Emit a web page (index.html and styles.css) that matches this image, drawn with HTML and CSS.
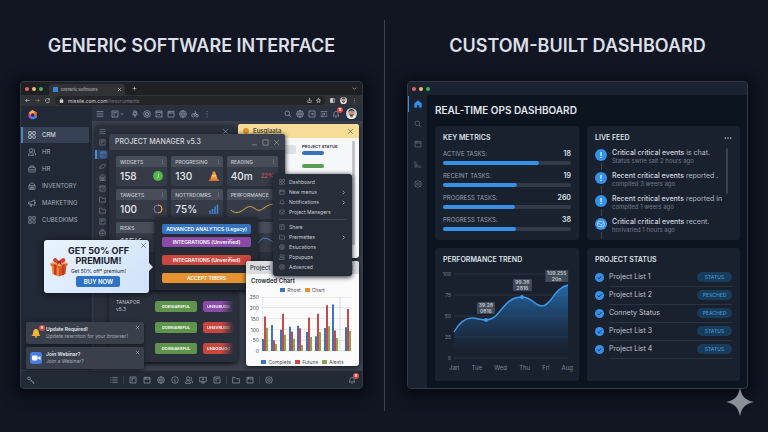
FILE: index.html
```html
<!DOCTYPE html>
<html lang="en">
<head>
  <meta charset="UTF-8">
  <meta name="viewport" content="width=device-width, initial-scale=1.0">
  <title>Software comparison</title>
  <link rel="stylesheet" href="styles.css">
</head>
<body>
  <!-- icon sprite -->
  <svg class="sprite" aria-hidden="true">
    <symbol id="i-menu" viewBox="0 0 24 24"><path d="M2 5h20M2 12h20M2 19h20"/></symbol>
    <symbol id="i-list" viewBox="0 0 24 24"><path d="M7 5h16M7 12h16M7 19h16M1 5h3M1 12h3M1 19h3"/></symbol>
    <symbol id="i-box" viewBox="0 0 24 24"><path d="M3 3h18v18H3zM7 8h10M7 12h5M8 17l3-2"/></symbol>
    <symbol id="i-boxcheck" viewBox="0 0 24 24"><path d="M3 3h18v18H3zM3 7h18M8 13l3 3 5-5"/></symbol>
    <symbol id="i-boxarrow" viewBox="0 0 24 24"><path d="M3 3h18v18H3zM8 12h8M13 8l4 4-4 4"/></symbol>
    <symbol id="i-calendar" viewBox="0 0 24 24"><path d="M3 4h18v17H3zM3 9h18M8 4v5"/></symbol>
    <symbol id="i-mic" viewBox="0 0 24 24"><path d="M12 2a4 4 0 0 1 4 4v5a4 4 0 0 1-8 0V6a4 4 0 0 1 4-4zM5 10c0 10 14 10 14 0M12 17v5M8 7h8"/></symbol>
    <symbol id="i-target" viewBox="0 0 24 24"><circle cx="12" cy="12" r="10"/><circle cx="12" cy="12" r="5"/><path d="M12 10v4"/></symbol>
    <symbol id="i-globe" viewBox="0 0 24 24"><circle cx="12" cy="12" r="10"/><path stroke-width="1.5" d="M2 12h20M12 2v20M12 2c-6 6-6 14 0 20M12 2c6 6 6 14 0 20"/></symbol>
    <symbol id="i-bike" viewBox="0 0 24 24"><circle cx="7" cy="16" r="5"/><circle cx="18" cy="17" r="4"/><path d="M7 16l6-8 5 9M11 3l4 3-2 5"/></symbol>
    <symbol id="i-dots" viewBox="0 0 24 24"><path d="M12 3v3M12 11v3M12 19v3"/></symbol>
    <symbol id="i-more" viewBox="0 0 24 24"><path stroke-width="3" d="M2 12h4M10 12h4M18 12h4"/></symbol>
    <symbol id="i-search" viewBox="0 0 24 24"><circle cx="10" cy="10" r="7"/><path d="M15 15l7 7"/></symbol>
    <symbol id="i-sliders" viewBox="0 0 24 24"><path d="M2 5h20M2 12h12M18 12h4M2 19h7M13 19h9M14 9v6M9 16v6"/></symbol>
    <symbol id="i-bell" viewBox="0 0 24 24"><path d="M3 18h18c-3-3-3-5-3-8 0-8-12-8-12 0 0 3 0 5-3 8zM10 22h4"/></symbol>
    <symbol id="i-grid" viewBox="0 0 24 24"><rect x="2" y="2" width="8" height="8" rx="1"/><rect x="14" y="2" width="8" height="8" rx="1"/><rect x="2" y="14" width="8" height="8" rx="1"/><rect x="14" y="14" width="8" height="8" rx="3"/></symbol>
    <symbol id="i-users" viewBox="0 0 24 24"><circle cx="9" cy="7" r="5"/><path d="M1 22c0-11 16-11 16 0zM16 3c5 0 5 8 1 9 4 1 6 4 6 10"/></symbol>
    <symbol id="i-case" viewBox="0 0 24 24"><rect x="2" y="7" width="20" height="14" rx="3"/><path d="M7 7V3h10v4M2 12c6 4 14 4 20 0M12 12v4"/></symbol>
    <symbol id="i-store" viewBox="0 0 24 24"><path d="M3 9l9-7 9 7v13H3zM3 11h18M8 22v-7h8v7M12 15v7"/></symbol>
    <symbol id="i-horn" viewBox="0 0 24 24"><path d="M2 9h6l12-6v17L8 15H2zM6 15l2 7h3l-1-6M22 9v5"/></symbol>
    <symbol id="i-folder" viewBox="0 0 24 24"><path d="M2 4h7l3 4h10v13H2z"/></symbol>
    <symbol id="i-leaf" viewBox="0 0 24 24"><path d="M3 19C1 9 9 10 12 7c3-3 6-3 10-3-1 6-2 6-4 10-3 6-10 1-15 5z"/></symbol>
    <symbol id="i-bars" viewBox="0 0 24 24"><path d="M3 3v18h19M8 18v-7M12 18v-3M16 18v-2M8 8l3 2"/></symbol>
    <symbol id="i-gear" viewBox="0 0 24 24"><path d="M12 1l3 3h5v5l3 3-3 3v5h-5l-3 3-3-3H4v-5l-3-3 3-3V4h5z"/><circle cx="12" cy="12" r="4"/></symbol>
    <symbol id="i-info" viewBox="0 0 24 24"><circle cx="12" cy="12" r="10"/><path d="M12 6v2M10 11h2v7"/></symbol>
    <symbol id="i-screen" viewBox="0 0 24 24"><path d="M2 4h20v13H2zM12 17v4M7 21h10M12 7v6M9 10h6"/></symbol>
    <symbol id="i-key" viewBox="0 0 24 24"><circle cx="6" cy="7" r="4"/><path d="M9 10l12 10M14 14l-3 4M18 18v4h4"/></symbol>
    <symbol id="i-share" viewBox="0 0 24 24"><path d="M12 15V2M8 6l4-4 4 4M6 10H4v12h16V10h-2"/></symbol>
    <symbol id="i-star" viewBox="0 0 24 24"><path d="M12 2l3 7 7 1-5 5 1 7-6-4-6 4 1-7-5-5 7-1z"/></symbol>
    <symbol id="i-back" viewBox="0 0 24 24"><path d="M22 12H3M11 4l-8 8 8 8"/></symbol>
    <symbol id="i-forward" viewBox="0 0 24 24"><path d="M2 12h19M13 4l8 8-8 8"/></symbol>
    <symbol id="i-reload" viewBox="0 0 24 24"><path d="M20 6a10 10 0 1 0 2 8M21 1v7h-7"/></symbol>
    <symbol id="i-lock" viewBox="0 0 24 24"><path fill="currentColor" d="M5 10h14v11H5z"/><path d="M8 10V7c0-5 8-5 8 0v3"/></symbol>
    <symbol id="i-close" viewBox="0 0 24 24"><path d="M4 4l16 16M20 4L4 20"/></symbol>
    <symbol id="i-min" viewBox="0 0 24 24"><path d="M3 20h18"/></symbol>
    <symbol id="i-max" viewBox="0 0 24 24"><path d="M3 3h18v18H3z"/></symbol>
    <symbol id="i-plus" viewBox="0 0 24 24"><path d="M12 3v18M3 12h18"/></symbol>
    <symbol id="i-down" viewBox="0 0 24 24"><path d="M4 8l8 8 8-8"/></symbol>
    <symbol id="i-right" viewBox="0 0 24 24"><path d="M8 3l9 9-9 9"/></symbol>
    <symbol id="i-panel" viewBox="0 0 24 24"><path d="M3 3h18v18H3z"/><path fill="currentColor" d="M3 3h10v18H3z"/></symbol>
    <symbol id="i-check" viewBox="0 0 24 24"><path d="M6 12l4 5 8-9"/></symbol>
    <symbol id="i-alert" viewBox="0 0 24 24"><path stroke-width="4" d="M12 3v11M12 17v4"/></symbol>
    <symbol id="i-mail" viewBox="0 0 24 24"><rect x="2" y="4" width="20" height="16" rx="5"/><path d="M3 8l9 7 9-7"/></symbol>
    <symbol id="i-home" viewBox="0 0 24 24"><path fill="currentColor" d="M12 2L2 10v12h6v-7h8v7h6V10z"/></symbol>
    <symbol id="i-face" viewBox="0 0 24 24"><g stroke="none"><circle cx="12" cy="12" r="12" fill="#c9cdd3"/><path d="M3 20c1-7 17-7 18 0-4 5-14 5-18 0z" fill="#eef0f3"/><path d="M9 14h6v5l-3 2-3-2z" fill="#a56f56"/><ellipse cx="12" cy="11" rx="5" ry="6" fill="#c98f74"/><path d="M6 11C3-1 21-1 18 11c-1-5-2-5-6-5s-5 0-6 5z" fill="#2f2928"/><path d="M7 13c0 7 10 7 10 0-2 2-8 2-10 0z" fill="#5d463d"/></g></symbol>
  </svg>

  <section class="side side-left">
    <h1>GENERIC SOFTWARE INTERFACE</h1>
    <div class="window browser">
      <div class="tabs">
        <i class="light red"></i><i class="light yellow"></i><i class="light green"></i>
        <div class="tab"><b class="favicon"></b><span>Dreneric Softhoons</span><svg class="icon tiny"><use href="#i-close"/></svg></div>
        <svg class="icon tiny"><use href="#i-plus"/></svg>
        <svg class="icon tiny push"><use href="#i-down"/></svg>
      </div>
      <div class="address">
        <svg class="icon tiny"><use href="#i-back"/></svg>
        <svg class="icon tiny dim"><use href="#i-forward"/></svg>
        <svg class="icon tiny"><use href="#i-reload"/></svg>
        <div class="url">
          <svg class="icon tiny"><use href="#i-lock"/></svg>
          <span>missile.com.com<em>/lissoruments</em></span>
          <svg class="icon tiny push"><use href="#i-share"/></svg>
          <svg class="icon tiny"><use href="#i-star"/></svg>
        </div>
        <svg class="icon tiny"><use href="#i-panel"/></svg>
        <svg class="icon small"><use href="#i-face"/></svg>
        <svg class="icon tiny"><use href="#i-dots"/></svg>
      </div>

      <div class="app">
        <aside class="sidebar">
          <svg class="logo" viewBox="0 0 24 26">
            <path stroke="#d94b9b" d="M5 8v11"/>
            <path stroke="#8b5be8" d="M4 17l8 5"/>
            <path stroke="#3d8bf0" d="M11 22l9-4v-4"/>
            <path stroke="#ee6a3d" d="M20 15V8l-6-3"/>
            <path stroke="#fbb04a" d="M16 6l-4-2-8 5"/>
          </svg>
          <nav>
            <a href="#" class="active"><svg class="icon"><use href="#i-grid"/></svg>CRM</a>
            <a href="#"><svg class="icon"><use href="#i-users"/></svg>HR</a>
            <a href="#"><svg class="icon"><use href="#i-case"/></svg>HR</a>
            <a href="#"><svg class="icon"><use href="#i-store"/></svg>INVENTORY</a>
            <a href="#"><svg class="icon"><use href="#i-horn"/></svg>MARKETING</a>
            <a href="#"><svg class="icon"><use href="#i-grid"/></svg>CUBEDKIMS</a>
          </nav>
        </aside>

        <div class="main">
          <div class="toolbar">
            <svg class="icon"><use href="#i-menu"/></svg>
            <span class="drop"><svg class="icon"><use href="#i-box"/></svg><svg class="icon caret"><use href="#i-down"/></svg></span>
            <svg class="icon"><use href="#i-mic"/></svg>
            <svg class="icon"><use href="#i-target"/></svg>
            <svg class="icon"><use href="#i-boxcheck"/></svg>
            <svg class="icon"><use href="#i-calendar"/></svg>
            <svg class="icon"><use href="#i-globe"/></svg>
            <svg class="icon"><use href="#i-bike"/></svg>
            <svg class="icon"><use href="#i-dots"/></svg>
            <svg class="icon push"><use href="#i-search"/></svg>
            <svg class="icon"><use href="#i-globe"/></svg>
            <svg class="icon"><use href="#i-boxarrow"/></svg>
            <svg class="icon"><use href="#i-sliders"/></svg>
            <span class="alerts"><svg class="icon"><use href="#i-bell"/></svg><b class="badge">9</b></span>
            <svg class="avatar"><use href="#i-face"/></svg>
          </div>

          <div class="desk">
            <div class="pane tools">
              <div class="rail">
                <svg class="icon"><use href="#i-menu"/></svg>
                <svg class="icon"><use href="#i-box"/></svg>
                <span class="on"><svg class="icon"><use href="#i-boxcheck"/></svg></span>
                <svg class="icon"><use href="#i-leaf"/></svg>
                <svg class="icon"><use href="#i-store"/></svg>
                <svg class="icon"><use href="#i-boxcheck"/></svg>
                <svg class="icon"><use href="#i-folder"/></svg>
                <svg class="icon"><use href="#i-folder"/></svg>
                <svg class="icon"><use href="#i-box"/></svg>
                <svg class="icon"><use href="#i-case"/></svg>
              </div>
              <svg class="icon small"><use href="#i-close"/></svg>
            </div>

            <div class="pane notice">
              <header><i class="coin"></i>Eusglaata<svg class="icon small push"><use href="#i-close"/></svg></header>
              <div class="notice-body">
                <i class="ghost"></i>
                <div class="notice-status">
                  <h3>PROJECT STATUS</h3>
                  <i class="chip blue"></i>
                  <i class="chip green"></i>
                </div>
              </div>
            </div>

            <div class="pane modules">
              <div class="module"><p>TANAPOR<br><span>v5.3</span></p><button class="ok">DOENIARSFUL</button><button class="un purple">UNSUBUGG</button></div>
              <div class="module"><p></p><button class="ok">DOENIAREFUL</button><button class="un red">UNSVRUGG</button></div>
              <div class="module"><p></p><button class="ok">DOSNIAKSFUL</button><button class="un red">UNSODUGG</button></div>
            </div>

            <div class="pane manager">
              <header><h2>PROJECT MANAGER v5.3</h2>
                <svg class="icon small push"><use href="#i-min"/></svg><svg class="icon small"><use href="#i-max"/></svg><svg class="icon small"><use href="#i-close"/></svg>
              </header>
              <div class="cards">
                <div class="card"><h4>WIDGETS<svg class="icon tiny"><use href="#i-dots"/></svg></h4><div class="value">158<svg viewBox="0 0 20 20"><circle cx="10" cy="10" r="10" fill="#52b84e"/><path d="M11 5v7M11 12l-3 2" stroke="#a6e59c" stroke-width="2"/></svg></div></div>
                <div class="card"><h4>PROGRESING<svg class="icon tiny"><use href="#i-dots"/></svg></h4><div class="value">130<svg viewBox="0 0 20 20"><path fill="#f0903a" d="M8 1h4l6 17H2z"/><path fill="#f7c99a" d="M6 8h8l1 3H5z"/><path fill="#d8702a" d="M0 17h20v3H0z"/></svg></div></div>
                <div class="card"><h4>READING<svg class="icon tiny"><use href="#i-dots"/></svg></h4><div class="value">40m<small>22%</small></div></div>
                <div class="card"><h4>TAWGETS<svg class="icon tiny"><use href="#i-dots"/></svg></h4><div class="value">100<svg viewBox="0 0 20 20" stroke-width="2"><circle cx="10" cy="10" r="8" stroke="#8a6fa8"/><path stroke="#f0a63a" d="M10 2a8 8 0 0 1 0 16"/></svg></div></div>
                <div class="card"><h4>NOTTRDOMRS<svg class="icon tiny"><use href="#i-dots"/></svg></h4><div class="value">75%<svg viewBox="0 0 20 20" stroke="#3f87d6" stroke-width="3"><path d="M2 20v-7M7 20V10M12 20V5M17 20V1"/></svg></div></div>
                <div class="card"><h4>PERFORMANCE<svg class="icon tiny"><use href="#i-dots"/></svg></h4><svg class="wave" viewBox="0 0 42 12"><path stroke="#e0a94a" d="M0 7c4 4 8 3 12 0s7-5 11-2 6 3 10 0 5-3 9-4"/></svg></div>
                <div class="card"><h4>RISKS</h4><div class="value">115K</div></div>
                <div class="card"><h4></h4></div>
                <div class="card"><h4></h4><svg class="wave" viewBox="0 0 42 12"><path stroke="#4f86d8" d="M0 8c4-8 10-4 16-2s8 6 12 0 8-4 14 0"/></svg></div>
              </div>
            </div>

            <div class="pane addons">
              <button class="blue">ADVANCED ANALYTICS (Legacy)</button>
              <button class="purple">INTEGRATIONS (Unverified)</button>
              <button class="red">INTEGRATIONS (Unverified)</button>
              <button class="orange">ACCEPT TIBERS</button>
            </div>

            <div class="pane chart">
              <header>Project<svg class="icon tiny push"><use href="#i-dots"/></svg></header>
              <h3>Crowded Chart</h3>
              <ul class="legend"><li class="blue">Rhost</li><li class="orange">Chart</li></ul>
              <div class="plot">
                <div class="scale"><span>250</span><span>200</span><span>150</span><span>100</span><span>50</span><span>0</span></div>
                <svg viewBox="0 0 90 250" preserveAspectRatio="none">
                  <path stroke="#dfe2e6" stroke-width="4" d="M0 2H90M0 50H90M0 100H90M0 150H90M0 200H90M0 248H90"/>
                  <path stroke="#c3c8ce" stroke-width="1" d="M0 0V250M78 0V250"/>
                  <g stroke-width="2">
                    <path stroke="#3f74bd" d="M1 250v-55M10 250v-120M19 250v-98M28 250v-112M36 250v-117M45 250v-88M54 250v-68M63 250v-106M71 250v-215M84 250v-110"/>
                    <path stroke="#c9494b" d="M3 250v-160M12 250v-50M21 250v-173M30 250v-90M38 250v-105M47 250v-155M56 250v-173M65 250v-212M73 250v-95M86 250v-195"/>
                    <path stroke="#86a950" d="M5 250v-108M14 250v-32M23 250v-75M32 250v-57M40 250v-28M49 250v-65M58 250v-88M67 250v-115M75 250v-60M88 250v-93"/>
                  </g>
                </svg>
              </div>
              <ul class="legend"><li class="blue">Complete</li><li class="red">Futuns</li><li class="green">Alests</li></ul>
            </div>

            <ul class="pane menu">
              <li><svg class="icon"><use href="#i-grid"/></svg>Dashboard</li>
              <li><svg class="icon"><use href="#i-calendar"/></svg>New menus<svg class="icon tiny push"><use href="#i-right"/></svg></li>
              <li><svg class="icon"><use href="#i-bell"/></svg>Notifications<svg class="icon tiny push"><use href="#i-right"/></svg></li>
              <li><svg class="icon"><use href="#i-mail"/></svg>Project Managers</li>
              <li class="split"><svg class="icon"><use href="#i-box"/></svg>Share</li>
              <li><svg class="icon"><use href="#i-folder"/></svg>Prermettes<svg class="icon tiny push"><use href="#i-right"/></svg></li>
              <li><svg class="icon"><use href="#i-target"/></svg>Esiucations</li>
              <li><svg class="icon"><use href="#i-users"/></svg>Popupups</li>
              <li><svg class="icon"><use href="#i-gear"/></svg>Advanced</li>
            </ul>
          </div>
        </div>

        <div class="promo">
          <svg class="gift" viewBox="0 0 36 40">
            <path fill="#e98a2e" d="M3 17l15 4v18L5 34z"/><path fill="#c9561f" d="M18 21l15-4-2 17-13 5z"/>
            <path fill="#f6a845" d="M1 12l17-4 17 4-17 6z"/><path fill="#d96b24" d="M1 12l17 6v5L1 17zM35 12l-17 6v5l17-6z"/>
            <path fill="#cf2f35" d="M8 14l5 2v21l-5-2zM25 15l4-1-1 21-4 2z"/>
            <path fill="#d93840" d="M18 11C10 13 4 9 7 4s10 1 11 7c1-6 9-12 12-7s-4 9-12 7z"/><path fill="#9c1f2a" d="M16 9l2-2 3 2 3 8-6-5-5 5z"/>
          </svg>
          <div class="promo-text">
            <h2>GET 50% OFF<br>PREMIUM!</h2>
            <p>Get 50% off* premium!</p>
            <button>BUY NOW</button>
          </div>
          <svg class="icon small"><use href="#i-close"/></svg>
        </div>

        <div class="toasts">
          <div class="toast">
            <span class="alerts"><svg class="bell" viewBox="0 0 24 24"><path fill="#f3b53a" d="M1 19c5-3 3-8 5-12 2-6 10-6 12 0 2 4 0 9 5 12z"/><circle cx="12" cy="21" r="3" fill="#d98a25"/></svg><b class="badge">8</b></span>
            <p><strong>Update Required!</strong><br>Update rewrnton for your browser!</p>
            <svg class="icon tiny push"><use href="#i-close"/></svg>
          </div>
          <div class="toast">
            <svg class="cam" viewBox="0 0 24 24"><rect width="24" height="24" rx="5" fill="#4a7be0"/><rect x="4" y="7" width="11" height="10" rx="2" fill="#fff"/><path fill="#fff" d="M16 11l5-3v8l-5-3z"/></svg>
            <p><strong>Join Webinar?</strong><br>Join a Webinar?</p>
            <svg class="icon tiny push"><use href="#i-close"/></svg>
          </div>
        </div>
      </div>

      <div class="dock">
        <svg class="icon"><use href="#i-key"/></svg>
        <div class="dock-icons">
          <svg class="icon"><use href="#i-list"/></svg><i></i>
          <svg class="icon"><use href="#i-box"/></svg>
          <svg class="icon"><use href="#i-calendar"/></svg>
          <svg class="icon"><use href="#i-globe"/></svg>
          <svg class="icon"><use href="#i-info"/></svg>
          <svg class="icon"><use href="#i-users"/></svg>
          <svg class="icon"><use href="#i-screen"/></svg>
          <svg class="icon"><use href="#i-box"/></svg><i></i>
          <svg class="icon"><use href="#i-folder"/></svg>
          <svg class="icon"><use href="#i-calendar"/></svg><i></i>
          <svg class="icon"><use href="#i-gear"/></svg>
        </div>
        <span class="alerts"><svg class="icon"><use href="#i-bell"/></svg><b class="badge">8</b></span>
      </div>
    </div>
  </section>

  <section class="side side-right">
    <h1>CUSTOM-BUILT DASHBOARD</h1>
    <div class="window ops">
      <div class="titlebar"><i class="light red"></i><i class="light yellow"></i><i class="light green"></i></div>
      <nav class="ops-nav">
        <a href="#" class="active" aria-label="Home"><svg class="icon"><use href="#i-home"/></svg></a>
        <a href="#" aria-label="Search"><svg class="icon"><use href="#i-search"/></svg></a>
        <a href="#" aria-label="Calendar"><svg class="icon"><use href="#i-calendar"/></svg></a>
        <a href="#" aria-label="Reports"><svg class="icon"><use href="#i-bars"/></svg></a>
        <a href="#" aria-label="Settings"><svg class="icon"><use href="#i-gear"/></svg></a>
      </nav>
      <main>
        <h2>REAL-TIME OPS DASHBOARD</h2>
        <div class="panels">
          <div class="panel metrics">
            <h3>KEY METRICS</h3>
            <div class="metric"><span>ACTIVE TASKS:</span><b>18</b><i class="bar"><i style="width:75%"></i></i></div>
            <div class="metric"><span>RECEINT TASKS:</span><b>19</b><i class="bar"><i style="width:58%"></i></i></div>
            <div class="metric"><span>PROGRESS TASKS:</span><b>260</b><i class="bar"><i style="width:56%"></i></i></div>
            <div class="metric"><span>PROGRESS TASKS:</span><b>38</b><i class="bar"><i style="width:57%"></i></i></div>
          </div>

          <div class="panel live">
            <h3>LIVE FEED<svg class="icon push"><use href="#i-more"/></svg></h3>
            <ul class="feed">
              <li><span class="dot"><svg class="icon"><use href="#i-alert"/></svg></span><p><b>Critical critical events</b> is chat.<small>Status swne sait 2 hours ago</small></p></li>
              <li><span class="dot"><svg class="icon"><use href="#i-alert"/></svg></span><p><b>Recent critical events</b> reported .<small>compited 3 weers ago</small></p></li>
              <li><span class="dot"><svg class="icon"><use href="#i-alert"/></svg></span><p><b>Recent critical events</b> reported in<small>compited 1 weers ago</small></p></li>
              <li><span class="dot"><svg class="icon"><use href="#i-mail"/></svg></span><p><b>Critical critical events</b> recent.<small>horivaried 1 hours ago</small></p></li>
            </ul>
          </div>

          <div class="panel trend">
            <h3>PERFORMANCE TREND</h3>
            <div class="graph">
              <div class="scale"><span>100</span><span>75</span><span>50</span><span>25</span><span>0</span></div>
              <div class="area">
                <svg viewBox="0 0 114 84" preserveAspectRatio="none">
                  <defs><linearGradient id="fade" x1="0" y1="0" x2="0" y2="1"><stop offset="0" stop-color="#2a7fce" stop-opacity=".75"/><stop offset="1" stop-color="#1d5a96" stop-opacity="0"/></linearGradient></defs>
                  <path stroke="#2a3442" d="M0 0H114M0 21H114M0 42H114M0 63H114M0 84H114"/>
                  <path fill="url(#fade)" d="M0 58C5 49 11 44 18 44C23 44 27 46 32 46C47 46 48 23 68 23C78 23 81 32 88 32C97 32 100 14 114 11V78H0z"/>
                  <path fill="none" stroke="#3d9bee" stroke-width="1.4" d="M0 58C5 49 11 44 18 44C23 44 27 46 32 46C47 46 48 23 68 23C78 23 81 32 88 32C97 32 100 14 114 11"/>
                  <circle cx="32" cy="46" r="2" fill="#3d9bee"/><circle cx="68" cy="23" r="2" fill="#3d9bee"/>
                </svg>
                <span class="tip tip-tue">39.28<br>0816</span>
                <span class="tip tip-thu">99.38<br>2816</span>
                <span class="tip tip-aug">109.255<br>20n</span>
              </div>
              <div class="days"><span>Jan</span><span>Tue</span><span>Wed</span><span>Thu</span><span>Fri</span><span>Aug</span></div>
            </div>
          </div>

          <div class="panel status">
            <h3>PROJECT STATUS</h3>
            <ul>
              <li><span class="tick"><svg class="icon"><use href="#i-check"/></svg></span><p>Project List 1<b>STATUS</b></p></li>
              <li><span class="tick"><svg class="icon"><use href="#i-check"/></svg></span><p>Project List 2<b>PEXCHED</b></p></li>
              <li><span class="tick"><svg class="icon"><use href="#i-check"/></svg></span><p>Connety Status<b>PEACHED</b></p></li>
              <li><span class="tick"><svg class="icon"><use href="#i-check"/></svg></span><p>Project List 3<b>STATUS</b></p></li>
              <li><span class="tick"><svg class="icon"><use href="#i-check"/></svg></span><p>Project List 4<b>STATUS</b></p></li>
            </ul>
          </div>
        </div>
      </main>
    </div>
  </section>
  <svg class="sparkle" viewBox="0 0 28 28"><path fill="#8d9098" d="M14 0c2 9 5 12 14 14-9 2-12 5-14 14-2-9-5-12-14-14 9-2 12-5 14-14z"/></svg>
</body>
</html>
```
FILE: styles.css
```css
* {margin: 0; padding: 0; box-sizing: border-box;}
ul {list-style-type: none;}
a {color: inherit; text-decoration: none;}
i, em {font-style: normal;}
button {border: 0; color: #fff; font-family: inherit; cursor: pointer;}

body {
  min-height: 100vh;
  display: grid;
  grid-template-columns: 1fr 1fr;
  background: #111622;
  color: #dfe3ea;
  font-family: Inter, "Liberation Sans", sans-serif;
  font-size: 7px;
  line-height: 10px;
  position: relative;
}
body::after {
  content: "";
  position: absolute;
  left: 50%; top: 20px; bottom: 22px;
  width: 1px;
  background: #3b414d;
}
.sprite {position: absolute; width: 0; height: 0;}
.side {display: flex; flex-direction: column; min-width: 0;}
.side-left {padding: 32px 21px 44px 20px;}
.side-right {padding: 32px 20px 44px 23px;}
h1 {
  margin-bottom: 21px;
  color: #dcdfe7;
  font-size: 18px;
  font-weight: 600;
  line-height: 28px;
  text-align: center;
  white-space: nowrap;
}
.window {
  flex: 1;
  min-height: 0;
  border: 1px solid #353b46;
  border-radius: 4px;
  overflow: hidden;
  box-shadow: 0 3px 14px 4px #060a12;
}

/* shared bits */
.icon {
  width: 8px; height: 8px;
  flex: none;
  fill: none;
  stroke: currentColor;
  stroke-width: 2;
}
.icon.small {width: 7px; height: 7px;}
.icon.tiny {width: 5px; height: 5px; stroke-width: 3;}
.push {margin-left: auto;}
.light {width: 4px; height: 4px; border-radius: 50%;}
.light.red {background: #e2636a;}
.light.yellow {background: #e9c266;}
.light.green {background: #41ae62;}
.blue {background: #3573bf;}
.purple {background: #8a4aa8;}
.red {background: #c9473f;}
.orange {background: #e6932f;}
.green {background: #55a052;}
.alerts {display: flex; position: relative;}
.badge {
  position: absolute;
  top: -3px; right: -3px;
  width: 6px; height: 6px;
  border-radius: 50%;
  background: #e2453f;
  color: #fff;
  font-size: 4px;
  line-height: 6px;
  text-align: center;
}

/* browser window */
.browser {display: flex; flex-direction: column; background: #242c39;}
.tabs {
  height: 13px;
  display: flex;
  align-items: center;
  gap: 3px;
  padding: 0 5px 0 4px;
  background: #1e2023;
  color: #c5c8cc;
}
.tab {
  width: 76px;
  height: 11px;
  align-self: flex-end;
  display: flex;
  align-items: center;
  justify-content: space-between;
  margin: 0 4px 0 3px;
  padding: 0 3px 0 4px;
  border-radius: 3px 3px 0 0;
  background: #303236;
  font-size: 4px;
}
.tab span {flex: 1; padding-left: 3px;}
.favicon {width: 5px; height: 5px; background: #3f82dd;}
.address {
  height: 11px;
  display: flex;
  align-items: center;
  gap: 5px;
  padding: 0 5px 0 4px;
  background: #303236;
  color: #d0d3d7;
}
.address .dim {color: #85898f;}
.url {
  flex: 1;
  height: 9px;
  display: flex;
  align-items: center;
  gap: 4px;
  padding: 0 4px;
  border-radius: 5px;
  background: #232529;
  font-size: 5px;
}
.url em {color: #777b81;}
.app {
  flex: 1;
  min-height: 0;
  display: grid;
  grid-template-columns: 71px 1fr;
  position: relative;
  color: #a5abb6;
}
.sidebar {background: #212936;}
.logo {display: block; width: 9px; height: 10px; margin: 4px 0 7px 7px; fill: none; stroke-width: 7;}
.sidebar nav {display: grid; gap: 1px; margin-right: 3px;}
.sidebar a {
  display: flex;
  align-items: center;
  gap: 6px;
  height: 16px;
  padding-left: 7px;
  font-size: 6px;
}
.sidebar a.active {
  padding-left: 5px;
  border-left: 2px solid #4a86bd;
  background: #364253;
  color: #e2e6ec;
}
.main {display: flex; flex-direction: column; min-width: 0;}
.toolbar {
  height: 15px;
  display: flex;
  align-items: center;
  gap: 4px;
  padding: 0 5px 0 4px;
  background: #283140;
}
.drop {display: flex; align-items: center; gap: 1px; margin: 0 3px 0 3px;}
.icon.caret {width: 4px; height: 4px; stroke-width: 4;}
.avatar {width: 11px; height: 11px; margin-left: 2px;}

/* floating windows on the desk */
.desk {
  flex: 1;
  position: relative;
  overflow: hidden;
  background: #3c434f;
}
.pane {
  position: absolute;
  border-radius: 3px;
  overflow: hidden;
  background: #2a303b;
  box-shadow: 0 1px 5px #10141c;
}
.tools {
  left: 3px; top: 4px; bottom: 8px;
  width: 139px;
  display: flex;
  justify-content: space-between;
  padding-right: 5px;
}
.tools > .icon {margin-top: 3px;}
.rail {
  width: 14px;
  display: flex;
  flex-direction: column;
  align-items: center;
  gap: 4px;
  padding-top: 3px;
  color: #858d99;
}
.rail .icon {width: 7px; height: 7px;}
.rail .on {
  align-self: stretch;
  display: flex;
  justify-content: center;
  padding: 1px 0;
  border-left: 2px solid #3f8ee0;
  background: #35486a;
  color: #5c9be6;
}
.notice {
  left: 146px; top: 3px; right: 3px;
  height: 134px;
  background: #f6f7f8;
}
.notice header {
  height: 14px;
  display: flex;
  align-items: center;
  gap: 4px;
  padding: 0 5px;
  background: #f7dc97;
  color: #4b4434;
  font-size: 6px;
  font-weight: 600;
}
.coin {width: 6px; height: 6px; border-radius: 50%; background: #d9952c;}
.notice-body {
  display: flex;
  align-items: flex-start;
  gap: 6px;
  height: 104px;
  margin: 3px 4px;
  padding: 3px 0 0 32px;
  border-right: 3px solid #c2c5ca;
}
.ghost {width: 22px; height: 9px; margin-top: 1px; border-radius: 2px; background: #dcdee2;}
.notice h3 {color: #3b4048; font-size: 4px; line-height: 6px; white-space: nowrap;}
.chip {display: block; width: 22px; height: 4px; margin: 1px 0 9px; border-radius: 2px;}
.modules {
  left: 17px; bottom: 8px;
  width: 129px;
  display: grid;
  gap: 9px;
  padding: 8px 5px 8px 7px;
}
.module {display: flex; align-items: center; gap: 6px; height: 12px;}
.module p {width: 33px; color: #b9bfc9; font-size: 5px; line-height: 7px;}
.module button {height: 11px; border-radius: 2px; font-size: 4px; font-weight: 600;}
.module .ok {width: 42px; background: #5f944c;}
.module .un {
  width: 31px;
  -webkit-mask-image: linear-gradient(90deg, #000 60%, transparent);
}
.manager {
  left: 17px; top: 13px;
  width: 176px;
  height: 156px;
  background: #2a303b;
}
.manager header {
  height: 16px;
  display: flex;
  align-items: center;
  gap: 4px;
  padding: 0 5px 0 6px;
  background: #3b414d;
}
.manager h2 {color: #d4d8df; font-size: 7px; font-weight: 500; white-space: nowrap;}
.cards {
  display: grid;
  grid-template-columns: 1fr 1fr 1fr;
  gap: 3px 4px;
  padding: 6px 7px;
}
.card {height: 30px; border-radius: 2px; background: #353b47; overflow: hidden;}
.card h4 {
  height: 11px;
  display: flex;
  align-items: center;
  justify-content: space-between;
  padding: 0 2px 0 4px;
  background: #474d59;
  color: #c3c8d0;
  font-size: 5px;
  font-weight: 500;
}
.value {
  height: 18px;
  display: flex;
  align-items: center;
  justify-content: space-between;
  padding: 0 4px;
  color: #e6e9ee;
  font-size: 10px;
  font-weight: 500;
}
.value svg {width: 10px; height: 10px; fill: none;}
.value small {color: #d8524c; font-size: 6px;}
.wave {display: block; width: 42px; height: 12px; margin: 3px 4px; fill: none;}
.addons {
  left: 63px; top: 96px;
  width: 103px;
  display: grid;
  gap: 3px;
  padding: 7px;
  background: #252b35;
}
.addons button {
  height: 10px;
  border-radius: 2px;
  font-size: 5px;
  font-weight: 600;
  line-height: 10px;
  white-space: nowrap;
}
.addons .red {margin: 5px 0;}
.chart {
  right: 3px; bottom: 4px;
  width: 113px;
  background: #fbfbfc;
  color: #4b5058;
}
.chart header {
  height: 13px;
  display: flex;
  align-items: center;
  padding: 0 4px;
  background: #d9dbdf;
  color: #2b2f36;
  font-size: 6px;
  font-weight: 500;
}
.chart h3 {margin: 2px 5px 0; color: #24282e; font-size: 6px; font-weight: 600;}
.legend {display: flex; justify-content: center; gap: 4px; font-size: 5px; line-height: 8px;}
.legend li {
  display: flex;
  align-items: center;
  gap: 2px;
  background: none;
}
.legend li::before {content: ""; width: 5px; height: 4px; background: #3f74bd;}
.legend .orange::before {background: #e6932f;}
.legend .red::before {background: #c9494b;}
.legend .green::before {background: #86a950;}
.plot {display: flex; gap: 3px; margin: 0 7px 4px 3px;}
.plot .scale {
  width: 10px;
  display: flex;
  flex-direction: column;
  justify-content: space-between;
  font-size: 5px;
  line-height: 6px;
  text-align: right;
}
.plot svg {flex: 1; min-width: 0; height: 54px; margin: 3px 0;}
.menu {
  left: 181px; top: 53px;
  width: 79px;
  padding: 3px 6px 4px;
  background: #282e39;
  color: #c8cdd5;
  font-size: 5px;
}
.menu li {display: flex; align-items: center; gap: 3px; height: 10px;}
.menu .icon:first-child {width: 6px; height: 6px; margin-right: 1px; color: #828a96;}
.menu .split {height: 13px; margin-top: 2px; padding-top: 2px; border-top: 1px solid #424955;}

/* promo and toasts lie over the whole app */
.promo {
  position: absolute;
  left: 23px; top: 134px;
  width: 105px;
  height: 53px;
  display: flex;
  align-items: center;
  padding: 0 6px;
  border-radius: 3px;
  background: linear-gradient(135deg, #e9f3ff, #cfe2fa);
  box-shadow: 0 1px 6px #10141c;
  color: #1d222b;
}
.promo::after {
  content: "";
  position: absolute;
  right: -4px; top: 23px;
  border: 4px solid transparent;
  border-width: 4px 0 4px 4px;
  border-left-color: #d4e5fb;
}
.promo > .icon {position: absolute; right: 2px; top: 2px; color: #4a505a;}
.gift {width: 18px; height: 20px; flex: none;}
.promo-text {text-align: center;}
.promo h2 {font-size: 9px; font-weight: 700; line-height: 10px; white-space: nowrap;}
.promo p {font-size: 5px; white-space: nowrap;}
.promo button {
  width: 44px;
  height: 11px;
  border-radius: 2px;
  background: #2f74c4;
  font-size: 6px;
  font-weight: 600;
}
.toasts {
  position: absolute;
  left: 5px; bottom: 1px;
  width: 118px;
  display: grid;
  gap: 3px;
}
.toast {
  height: 22px;
  display: flex;
  align-items: center;
  gap: 4px;
  padding: 0 4px;
  border-radius: 2px;
  background: #3a404b;
  box-shadow: 0 1px 4px #141921;
  font-size: 5px;
  line-height: 7px;
  white-space: nowrap;
}
.toast strong {color: #e4e7ec; font-weight: 600;}
.toast .push {align-self: flex-start; margin-top: 3px;}
.bell {width: 10px; height: 10px; margin: 0 1px;}
.cam {width: 12px; height: 12px;}
.dock {
  height: 18px;
  display: flex;
  align-items: center;
  justify-content: space-between;
  padding: 0 6px;
  border-top: 1px solid #323a47;
  background: #222a36;
  color: #98a0ad;
}
.dock-icons {display: flex; align-items: center; gap: 6px;}
.dock-icons i {width: 1px; height: 8px; margin: 0 -1px; background: #39414e;}

/* ops dashboard */
.ops {
  display: grid;
  grid-template-columns: 19px 1fr;
  grid-template-rows: 13px 1fr;
  background: #0c1420;
}
.titlebar {
  grid-column: 1 / 3;
  display: flex;
  align-items: center;
  gap: 3px;
  padding-left: 4px;
  background: #1b2331;
}
.ops-nav {display: flex; flex-direction: column; gap: 4px; padding-top: 1px; background: #1a2230; color: #697484;}
.ops-nav a {height: 16px; display: flex; align-items: center; justify-content: center;}
.ops-nav .active {border-left: 1px solid #3290ec; color: #3290ec;}
main {display: flex; flex-direction: column; min-width: 0; padding: 8px 7px 7px 8px;}
main h2 {margin-bottom: 8px; color: #e3e6ec; font-size: 10px; font-weight: 600; line-height: 15px;}
.panels {
  flex: 1;
  display: grid;
  grid-template-columns: 16fr 17fr;
  grid-template-rows: 113fr 132fr;
  gap: 8px;
}
.panel {
  min-width: 0;
  min-height: 0;
  padding: 7px 8px 0;
  border-radius: 3px;
  background: #19212e;
  overflow: hidden;
}
.panel h3 {
  display: flex;
  align-items: center;
  margin-bottom: 5px;
  color: #dce0e7;
  font-size: 7px;
  font-weight: 600;
}
.metrics {display: flex; flex-direction: column; gap: 6px;}
.metrics h3 {margin-bottom: 0;}
.metric {display: flex; flex-wrap: wrap; justify-content: space-between; row-gap: 2px; color: #98a0ad;}
.metric span {font-size: 6px;}
.metric b {color: #dce0e7; font-weight: 600;}
.bar {width: 100%; height: 4px; border-radius: 2px; background: #323a47;}
.bar i {display: block; height: 4px; border-radius: 2px; background: #3590e8;}
.feed {position: relative; padding-right: 4px;}
.feed::after {
  content: "";
  position: absolute;
  right: 4px; top: 0;
  width: 2px;
  height: 46px;
  border-radius: 1px;
  background: #3a4250;
}
.feed li {display: flex; gap: 5px; height: 23px; position: relative;}
.feed li::before {
  content: "";
  position: absolute;
  left: 6px; top: 15px;
  width: 1px;
  height: 7px;
  background: #3a4656;
}
.dot {
  width: 12px; height: 12px;
  display: flex;
  align-items: center;
  justify-content: center;
  margin-top: 1px;
  border-radius: 50%;
  background: #3590e8;
  color: #e4f0fc;
}
.feed p {color: #b4bac5; line-height: 9px; white-space: nowrap;}
.feed b {color: #d3d8e0; font-weight: 500;}
.feed small {display: block; color: #737d8c; font-size: 6px; line-height: 8px;}
.graph {
  display: grid;
  grid-template-columns: 8px 1fr;
  column-gap: 3px;
  padding: 4px 3px 0 0;
  color: #7c8594;
  font-size: 6px;
}
.graph .scale {
  display: flex;
  flex-direction: column;
  justify-content: space-between;
  align-items: flex-end;
  margin: -4px 0;
  font-size: 5px;
  line-height: 8px;
}
.area {position: relative; height: 84px;}
.area svg {display: block; width: 100%; height: 100%; overflow: visible;}
.tip {
  position: absolute;
  padding: 0 2px;
  border-radius: 1px;
  background: #424b59;
  color: #c3c8d0;
  font-size: 5px;
  font-weight: 600;
  line-height: 6px;
  text-align: center;
  transform: translateX(-50%);
}
.tip-tue {left: 28%; top: 28px;}
.tip-thu {left: 60%; top: 5px;}
.tip-aug {left: 90%; top: -4px;}
.days {grid-column: 1 / 3; display: flex; justify-content: space-between; margin: 5px -5px 0 6px;}
.status li {display: flex; align-items: center; gap: 5px; height: 18px;}
.status h3 {margin-bottom: 4px;}
.tick {display: flex; padding: 1px; border-radius: 50%; background: #3590e8; color: #14202e;}
.status .icon {width: 7px; height: 7px; stroke-width: 3;}
.status p {
  flex: 1;
  display: flex;
  align-items: center;
  justify-content: space-between;
  height: 18px;
  border-bottom: 1px solid #2b3442;
  color: #c3c8d2;
}
.status b {
  width: 35px;
  border-radius: 5px;
  background: #173c5c;
  color: #4a90c8;
  font-size: 5px;
  font-weight: 500;
  text-align: center;
}
.sparkle {
  position: absolute;
  right: 14px; bottom: 17px;
  width: 28px;
  height: 28px;
}
```
